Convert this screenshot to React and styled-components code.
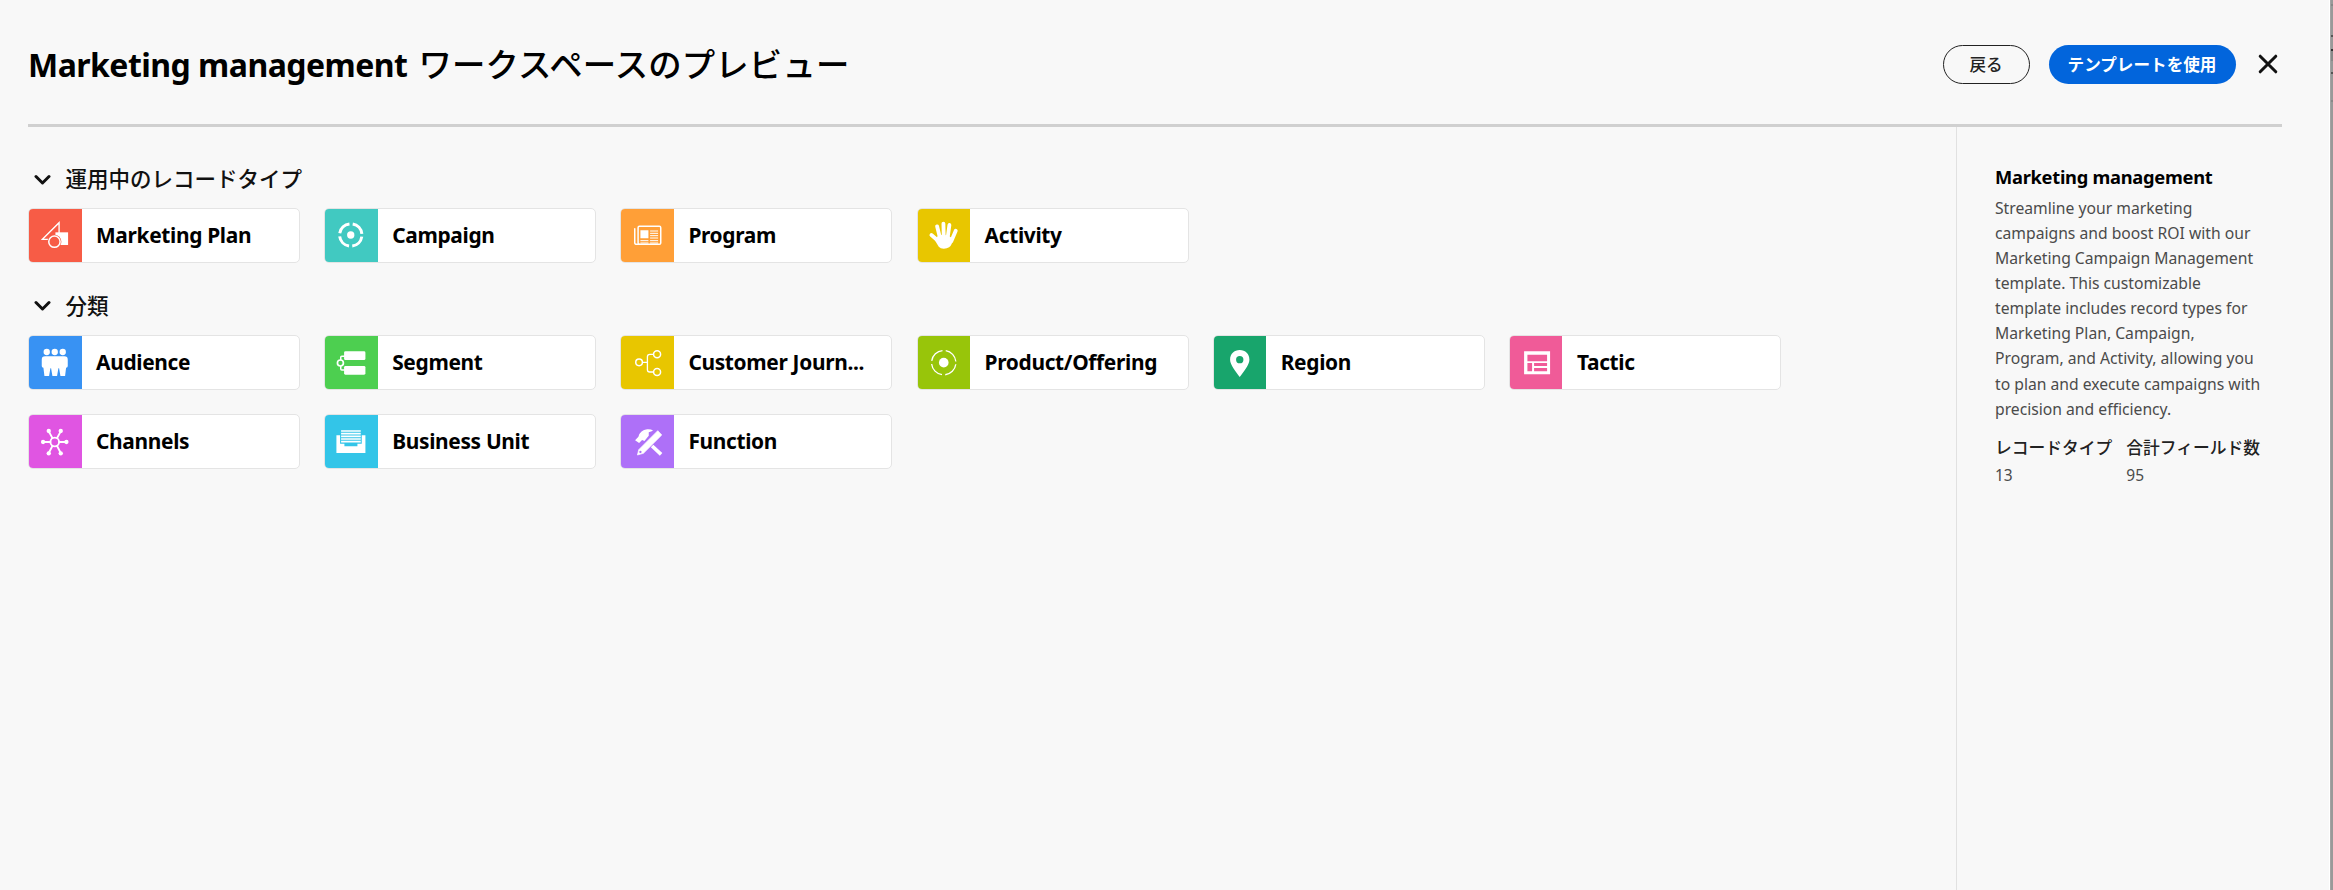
import React from 'react';
import styled, { createGlobalStyle } from 'styled-components';

const GlobalStyle = createGlobalStyle`
  * { box-sizing: border-box; }
  body {
    margin: 0;
    background: #f8f8f8;
    color: #000;
    font-family: "Noto Sans", "Noto Sans CJK JP", sans-serif;
  }
`;

const Page = styled.div`
  display: flex;
  height: 890px;
  overflow: hidden;
`;

const Dialog = styled.main`
  flex: 1;
  display: flex;
  flex-direction: column;
  padding: 0 47px 0 28px;
  border-right: 1px solid #fff;
`;

const Backdrop = styled.div`
  width: 3px;
  background: linear-gradient(
    #999 0 4px, #888 4px 6px, #999 6px 35px, #555 35px 37px, #999 37px 49px,
    #333 49px 51px, #888 51px 61px, #999 61px 72px, #555 72px 74px,
    #999 74px 100px, #888 100px 102px, #999 102px
  );
  border-left: 1px solid #a3a3a3;
`;

const Header = styled.header`
  display: flex;
  align-items: center;
  flex: none;
  height: 127px;
  padding-bottom: 1px;
  border-bottom: 3px solid #d0d0d0;
`;

const Title = styled.h1`
  flex: 1;
  display: flex;
  align-items: baseline;
  gap: 11px;
  margin: 0;
  padding-top: 4px;
  font-size: 32px;
  line-height: 44px;
  font-weight: 700;
  letter-spacing: -0.53px;
  white-space: nowrap;
`;

const TitleSuffix = styled.span`
  font-family: "Noto Sans CJK JP", sans-serif;
  font-size: 33.4px;
  font-weight: 500;
  letter-spacing: 0.15px;
`;

const Actions = styled.div`
  display: flex;
  align-items: center;
  padding: 5px 4px 0 0;
`;

const Button = styled.button`
  display: flex;
  align-items: center;
  justify-content: center;
  width: ${(p) => (p.$primary ? 187 : 87)}px;
  height: 39px;
  margin-right: ${(p) => (p.$primary ? 22.5 : 19)}px;
  padding: 0;
  border: ${(p) => (p.$primary ? 'none' : '1.5px solid #222')};
  border-radius: 20px;
  background: ${(p) => (p.$primary ? '#0265dc' : 'transparent')};
  color: ${(p) => (p.$primary ? '#fff' : '#222')};
  font: ${(p) => (p.$primary ? 700 : 500)} 16.6px/24px "Noto Sans CJK JP", sans-serif;
  white-space: nowrap;
`;

const CloseIcon = styled.svg`
  display: block;
  width: 20px;
  height: 20px;
`;

const Body = styled.div`
  flex: 1;
  display: flex;
  min-height: 0;
`;

const Content = styled.section`
  width: 1929px;
  flex: none;
  padding-top: 34px;
  border-right: 1px solid #e1e1e1;
`;

const Section = styled.section`
  height: 126.5px;
`;

const SectionHeader = styled.h2`
  display: flex;
  align-items: center;
  gap: 15px;
  height: 34px;
  margin: 0 0 13px;
  padding-left: 5.5px;
  font: 500 21.5px/34px "Noto Sans CJK JP", sans-serif;
  color: #111;
`;

const Chevron = styled.svg`
  display: block;
  width: 17px;
  height: 12px;
  margin-top: 3px;
`;

const CardGrid = styled.div`
  display: grid;
  grid-template-columns: repeat(6, 272px);
  gap: 24px 24.2px;
`;

const Card = styled.article`
  display: flex;
  align-items: center;
  height: 55px;
  border: 1px solid #e4e4e4;
  border-radius: 5px;
  background: #fff;
  overflow: hidden;
`;

const Tile = styled.svg`
  display: block;
  flex: none;
  width: 52.5px;
  height: 53px;
  background: ${(p) => p.$color};
`;

const CardName = styled.span`
  padding: 0 0 1px 14.5px;
  font-size: 20.9px;
  line-height: 28px;
  font-weight: 700;
  letter-spacing: -0.33px;
  white-space: nowrap;
`;

const Details = styled.aside`
  padding: 34px 0 0 38px;
`;

const DetailsTitle = styled.h3`
  margin: 0;
  font-size: 18.3px;
  line-height: 32px;
  font-weight: 700;
  letter-spacing: -0.27px;
`;

const Description = styled.p`
  width: 285px;
  margin: 2.5px 0 0;
  color: #4b4b4b;
  font-size: 15.7px;
  line-height: 25.15px;
  white-space: pre-line;
`;

const Stats = styled.dl`
  display: flex;
  gap: 14px;
  margin: 11px 0 0;
`;

const StatLabel = styled.dt`
  color: #222;
  font: 500 16.75px/28px "Noto Sans CJK JP", sans-serif;
  white-space: nowrap;
`;

const StatValue = styled.dd`
  margin: 0;
  color: #4b4b4b;
  font-size: 15.5px;
  line-height: 28px;
`;

const w = '#fff';
const line = { fill: 'none', stroke: w, strokeLinecap: 'round', strokeLinejoin: 'round' };

const SegmentedRing = ({ cy = 78, r, width, gap, dot }) => {
  const quarter = (Math.PI * r) / 2;
  return (
    <>
      <circle cx="77" cy={cy} r={r} fill="none" stroke={w} strokeWidth={width}
        strokeDasharray={`${quarter - gap} ${gap}`} strokeDashoffset={-gap / 2} />
      <circle cx="77" cy={cy} r={dot} fill={w} />
    </>
  );
};

const icons = {
  plan: (
    <>
      <path d="M40 91 90 41V91Z" {...line} strokeWidth="4" strokeLinejoin="miter" />
      <rect x="79" y="70" width="38" height="38" fill={w} />
      <circle cx="76" cy="98" r="21" fill="#f75c46" />
      <circle cx="76" cy="98" r="17" {...line} strokeWidth="4.5" />
    </>
  ),
  campaign: <SegmentedRing r={33.5} width={9} gap={10} dot={11} />,
  program: (
    <>
      <rect x="51" y="52" width="68" height="54" rx="4" {...line} strokeWidth="4.5" />
      <path d="M41 59V101Q41 106 47 106H54" {...line} strokeWidth="4.5" />
      <path d="M58 64H82V88H58Z" fill={w} />
      <path d="M87 66H111M87 73H111M87 80H111M87 87H111M58 95H82M87 95H111M58 102H82M87 102H111"
        {...line} strokeWidth="3" strokeLinecap="butt" />
    </>
  ),
  hand: (
    <>
      <path d="M40 78 60 95M57 52 65 84M76 44 77 82M94 48 89 84M113 65 100 96" {...line} strokeWidth="11.5" />
      <path d="M60 80Q77 74 93 82L106 89Q102 107 93 115Q87 119 77 119Q67 119 62 113L50 93Z" fill={w} />
    </>
  ),
  audience: (
    <>
      {[53, 77, 101].map((x) => <circle key={x} cx={x} cy="48" r="9.5" fill={w} />)}
      <path d="M48 61H106Q116 61 116 71V90Q116 95 111 95L108 120H94L90 97H88L84 120H70L66 97H64L60 120H46L43 95Q38 95 38 90V71Q38 61 48 61Z" fill={w} />
    </>
  ),
  segment: (
    <>
      <rect x="57" y="46" width="64" height="26" rx="4" fill={w} />
      <rect x="57" y="90" width="64" height="26" rx="4" fill={w} />
      <circle cx="46" cy="81" r="9" {...line} strokeWidth="5" />
      <path d="M47 71V64Q47 61 50 61H58M47 91V98Q47 102 50 102H58" {...line} strokeWidth="4.5" />
    </>
  ),
  journey: (
    <>
      <circle cx="54" cy="79" r="10" {...line} strokeWidth="4.5" />
      <circle cx="108" cy="55" r="10.5" {...line} strokeWidth="4.5" />
      <circle cx="108" cy="108" r="10.5" {...line} strokeWidth="4.5" />
      <path d="M65 79H79M97 55H86Q79 55 79 62V101Q79 108 86 108H97" {...line} strokeWidth="4" />
    </>
  ),
  product: <SegmentedRing cy={80} r={36.5} width={4} gap={10} dot={14.5} />,
  region: (
    <path fillRule="evenodd" fill={w}
      d="M77 42C94 42 106 54 106 71C106 86 89 106 77 123C65 106 48 86 48 71C48 54 60 42 77 42ZM77 60A11 11 0 1 0 77 82A11 11 0 1 0 77 60Z" />
  ),
  tactic: (
    <path fillRule="evenodd" fill={w}
      d="M42 46H120V115H42ZM52 56V76H111V56ZM52 81V106H66V81ZM72 81V90H111V81ZM72 96V106H111V96Z" />
  ),
  channels: (
    <>
      <circle cx="77" cy="81" r="13" {...line} strokeWidth="5.5" />
      <path d="M64 81H42M90 81H112M70 69 59 49M84 69 95 49M70 93 59 114M84 93 95 114" {...line} strokeWidth="5.5" />
      {[[42, 81], [112, 81], [59, 48], [95, 48], [59, 115], [95, 115]].map(([x, y]) => (
        <circle key={`${x}-${y}`} cx={x} cy={y} r="6.5" fill={w} />
      ))}
    </>
  ),
  business: (
    <>
      <path d="M34 61H45V86H58V94H97V86H110V61H121V114H34Z" fill={w} />
      <path d="M48 48H107M48 56H107M48 64H107M48 72H107M48 80H107" {...line} strokeWidth="5" strokeLinecap="butt" />
    </>
  ),
  tools: (
    <>
      <path d="M42 76 52 65Q58 45 78 43Q90 42 96 47L83 52V62L70 78L63 75L54 84Z" fill={w} />
      <path d="M93 93 120 118" {...line} strokeWidth="11" strokeLinecap="butt" />
      <path d="M110 47 122 60 67 115 49 120 53 104Z" fill={w} stroke={w} strokeWidth="2" />
      <circle cx="58" cy="111" r="3.5" fill="#ae70f8" />
    </>
  ),
};

const sections = [
  {
    title: '運用中のレコードタイプ',
    cards: [
      ['Marketing Plan', '#f75c46', 'plan'],
      ['Campaign', '#41c9c1', 'campaign'],
      ['Program', '#ff9f37', 'program'],
      ['Activity', '#e8c600', 'hand'],
    ],
  },
  {
    title: '分類',
    cards: [
      ['Audience', '#3892f3', 'audience'],
      ['Segment', '#4dcf50', 'segment'],
      ['Customer Journ...', '#e8c600', 'journey'],
      ['Product/Offering', '#98c50a', 'product'],
      ['Region', '#18a56c', 'region'],
      ['Tactic', '#f05b98', 'tactic'],
      ['Channels', '#e055e2', 'channels'],
      ['Business Unit', '#33c5e8', 'business'],
      ['Function', '#ae70f8', 'tools'],
    ],
  },
];

const description = `Streamline your marketing
campaigns and boost ROI with our
Marketing Campaign Management
template. This customizable
template includes record types for
Marketing Plan, Campaign,
Program, and Activity, allowing you
to plan and execute campaigns with
precision and efficiency.`;

export default function App() {
  return (
    <Page>
      <GlobalStyle />
      <Dialog>
        <Header>
          <Title>
            Marketing management
            <TitleSuffix>ワークスペースのプレビュー</TitleSuffix>
          </Title>
          <Actions>
            <Button>戻る</Button>
            <Button $primary>テンプレートを使用</Button>
            <CloseIcon viewBox="0 0 20 20">
              <path d="M2.2 2.2 17.8 17.8M17.8 2.2 2.2 17.8" fill="none" stroke="#111" strokeWidth="3" strokeLinecap="round" />
            </CloseIcon>
          </Actions>
        </Header>
        <Body>
          <Content>
            {sections.map((section) => (
              <Section key={section.title}>
                <SectionHeader>
                  <Chevron viewBox="0 0 17 12">
                    <path d="M2 2.5 8.5 9 15 2.5" fill="none" stroke="#111" strokeWidth="3" strokeLinecap="round" strokeLinejoin="round" />
                  </Chevron>
                  {section.title}
                </SectionHeader>
                <CardGrid>
                  {section.cards.map(([name, color, icon]) => (
                    <Card key={name}>
                      <Tile $color={color} viewBox="0 0 157 159">{icons[icon]}</Tile>
                      <CardName>{name}</CardName>
                    </Card>
                  ))}
                </CardGrid>
              </Section>
            ))}
          </Content>
          <Details>
            <DetailsTitle>Marketing management</DetailsTitle>
            <Description>{description}</Description>
            <Stats>
              <div>
                <StatLabel>レコードタイプ</StatLabel>
                <StatValue>13</StatValue>
              </div>
              <div>
                <StatLabel>合計フィールド数</StatLabel>
                <StatValue>95</StatValue>
              </div>
            </Stats>
          </Details>
        </Body>
      </Dialog>
      <Backdrop />
    </Page>
  );
}
